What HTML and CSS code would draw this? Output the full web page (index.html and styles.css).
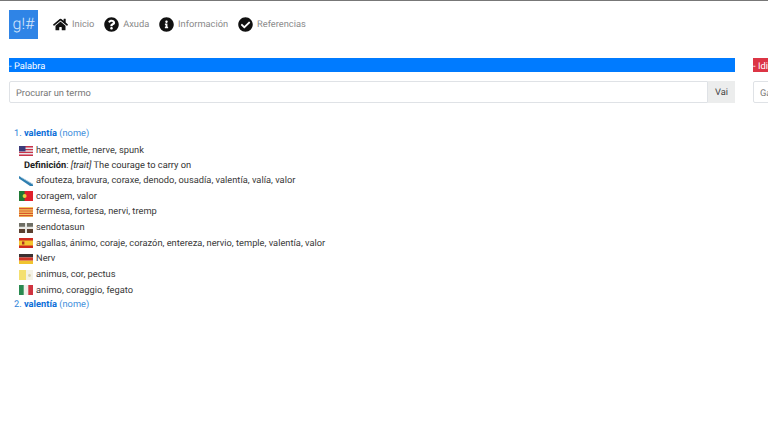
FILE: index.html
```html
<!DOCTYPE html>
<html lang="gl">
<head>
<meta charset="utf-8">
<title>Galnet</title>
<link rel="stylesheet" href="styles.css">
</head>
<body>
<header class="nav">
  <div class="logo">g!#</div>
  <a class="nav-item"><svg class="ico home" viewBox="0 0 576 512"><path d="M280.37 148.26L96 300.11V464a16 16 0 0 0 16 16l112.06-.29a16 16 0 0 0 15.92-16V368a16 16 0 0 1 16-16h64a16 16 0 0 1 16 16v95.64a16 16 0 0 0 16 16.05L464 480a16 16 0 0 0 16-16V300L295.67 148.26a12.19 12.19 0 0 0-15.3 0zM571.6 251.47L488 182.56V44.05a12 12 0 0 0-12-12h-56a12 12 0 0 0-12 12v72.61L318.47 43a48 48 0 0 0-61 0L4.34 251.47a12 12 0 0 0-1.6 16.9l25.5 31A12 12 0 0 0 45.15 301l235.22-193.74a12.19 12.19 0 0 1 15.3 0L530.9 301a12 12 0 0 0 16.9-1.6l25.5-31a12 12 0 0 0-1.7-16.93z"/></svg>Inicio</a>
  <a class="nav-item"><svg class="ico" viewBox="0 0 512 512"><path d="M504 256c0 136.997-111.043 248-248 248S8 392.997 8 256C8 119.083 119.043 8 256 8s248 111.083 248 248zM262.655 90c-54.497 0-89.255 22.957-116.549 63.758-3.536 5.286-2.353 12.415 2.715 16.258l34.699 26.31c5.205 3.947 12.621 3.008 16.665-2.122 17.864-22.658 30.113-35.797 57.303-35.797 20.429 0 45.698 13.148 45.698 32.958 0 14.976-12.363 22.667-32.534 33.976C247.128 238.528 216 254.941 216 296v4c0 6.627 5.373 12 12 12h56c6.627 0 12-5.373 12-12v-1.333c0-28.462 83.186-29.647 83.186-106.667 0-58.002-60.165-102-116.531-102zM256 338c-25.365 0-46 20.635-46 46 0 25.364 20.635 46 46 46s46-20.636 46-46c0-25.365-20.635-46-46-46z"/></svg>Axuda</a>
  <a class="nav-item"><svg class="ico" viewBox="0 0 512 512"><path d="M256 8C119.043 8 8 119.083 8 256c0 136.997 111.043 248 248 248s248-111.003 248-248C504 119.083 392.957 8 256 8zm0 110c23.196 0 42 18.804 42 42s-18.804 42-42 42-42-18.804-42-42 18.804-42 42-42zm56 254c0 6.627-5.373 12-12 12h-88c-6.627 0-12-5.373-12-12v-24c0-6.627 5.373-12 12-12h12v-64h-12c-6.627 0-12-5.373-12-12v-24c0-6.627 5.373-12 12-12h64c6.627 0 12 5.373 12 12v100h12c6.627 0 12 5.373 12 12v24z"/></svg>Información</a>
  <a class="nav-item"><svg class="ico" viewBox="0 0 512 512"><path d="M504 256c0 136.967-111.033 248-248 248S8 392.967 8 256 119.033 8 256 8s248 111.033 248 248zM227.314 387.314l184-184c6.248-6.248 6.248-16.379 0-22.627l-22.627-22.627c-6.248-6.249-16.379-6.249-22.628 0L216 308.118l-70.059-70.059c-6.248-6.248-16.379-6.248-22.628 0l-22.627 22.627c-6.248 6.248-6.248 16.379 0 22.627l104 104c6.249 6.249 16.379 6.249 22.628.001z"/></svg>Referencias</a>
</header>
<main class="search">
  <section class="panel panel-word">
    <div class="bar bar-blue">- Palabra</div>
    <div class="field"><div class="input">Procurar un termo</div><div class="go">Vai</div></div>
  </section>
  <section class="panel panel-lang">
    <div class="bar bar-red">- Idioma</div>
    <div class="field"><div class="input">Galego</div></div>
  </section>
</main>
<section class="results">
  <div class="head">1. <b class="term">valentía</b> <span class="pos">(nome)</span></div>
  <div class="row"><svg class="flag" viewBox="0 0 14 10"><rect width="14" height="10" fill="#e8e4ea"/><path d="M0 0h14v1.4H0zM0 2.9h14v1.4H0zM0 5.7h14v1.4H0zM0 8.6h14V10H0z" fill="#c9344a"/><rect width="6.5" height="5.4" fill="#3c3b7a"/></svg>heart, mettle, nerve, spunk</div>
  <div class="def"><b>Definición</b>: <i>[trait]</i> The courage to carry on</div>
  <div class="row"><svg class="flag" viewBox="0 0 14 10"><path d="M0 0l14 8v2H11L0 2.5z" fill="#2f7fb0"/><path d="M1 .2l13 7.6v1L2 1.6z" fill="#bcd6e6"/></svg>afouteza, bravura, coraxe, denodo, ousadía, valentía, valía, valor</div>
  <div class="row"><svg class="flag" viewBox="0 0 14 10"><rect width="14" height="10" fill="#e0202a"/><rect width="5.6" height="10" fill="#1f7a35"/><circle cx="5.6" cy="5" r="2" fill="#e8d040"/></svg>coragem, valor</div>
  <div class="row"><svg class="flag" viewBox="0 0 14 10"><rect width="14" height="10" fill="#f4c860"/><path d="M0 1.1h14v1.2H0zM0 3.4h14v1.2H0zM0 5.7h14v1.2H0zM0 8h14v1.2H0z" fill="#d8552a"/></svg>fermesa, fortesa, nervi, tremp</div>
  <div class="row"><svg class="flag" viewBox="0 0 14 10"><rect width="14" height="10" fill="#e8e8e4"/><path d="M0 0h6v3.8H0zM8 0h6v3.8H8z" fill="#6e6e64"/><path d="M0 6h6v4H0zM8 6h6v4H8z" fill="#5a4030"/></svg>sendotasun</div>
  <div class="row"><svg class="flag" viewBox="0 0 14 10"><rect width="14" height="10" fill="#cf2a20"/><rect y="2.5" width="14" height="5" fill="#f4c530"/><rect x="3" y="3.5" width="2.4" height="3" fill="#b03020"/></svg>agallas, ánimo, coraje, corazón, entereza, nervio, temple, valentía, valor</div>
  <div class="row"><svg class="flag" viewBox="0 0 14 10"><rect width="14" height="3.4" fill="#3a3030"/><rect y="3.4" width="14" height="3.3" fill="#d03428"/><rect y="6.7" width="14" height="3.3" fill="#f0c430"/></svg>Nerv</div>
  <div class="row"><svg class="flag" viewBox="0 0 14 10"><rect width="14" height="10" fill="#f4f2e6"/><rect width="7" height="10" fill="#f4e070"/><circle cx="10.5" cy="5.5" r="1.4" fill="#d8d2b0"/></svg>animus, cor, pectus</div>
  <div class="row"><svg class="flag" viewBox="0 0 14 10"><rect width="14" height="10" fill="#f0f0ea"/><rect width="4.7" height="10" fill="#2a8a50"/><rect x="9.3" width="4.7" height="10" fill="#d03440"/></svg>animo, coraggio, fegato</div>
  <div class="head">2. <b class="term">valentía</b> <span class="pos">(nome)</span></div>
</section>
</body>
</html>
```
FILE: styles.css
```css
html, body { margin: 0; padding: 0; }
body {
  width: 768px;
  height: 432px;
  overflow: hidden;
  background: #fff;
  color: #3a3a3a;
  font-family: Roboto, "Noto Sans", sans-serif;
  font-size: 9.3px;
  text-rendering: geometricPrecision;
  border-top: 1px solid #777;
  box-sizing: border-box;
}
.nav {
  display: flex;
  align-items: center;
  gap: 9.8px;
  padding: 9px 0 0 9px;
  height: 29px;
}
.logo {
  width: 29px;
  height: 29px;
  margin-right: 5.2px;
  background: #2f84e6;
  color: #d6e6fb;
  font-size: 16px;
  font-weight: 300;
  line-height: 28px;
  text-align: center;
}
.nav-item {
  display: flex;
  align-items: center;
  gap: 4px;
  color: #8a8a8a;
  margin-top: -1px;
}
.ico { width: 15px; height: 15px; fill: #111; }
.search {
  display: flex;
  gap: 18px;
  margin-top: 19px;
  padding-left: 9px;
}
.panel { flex: none; }
.panel-word { width: 726px; }
.panel-lang { width: 200px; }
.bar {
  height: 14px;
  line-height: 17px;
  color: #fff;
}
.bar-blue { background: #007bff; }
.bar-red { background: #dc3545; }
.field { display: flex; margin-top: 9px; height: 22px; }
.input {
  flex: 1;
  box-sizing: border-box;
  border: 1px solid #dfe2e6;
  border-radius: 2px 0 0 2px;
  padding: 1px 0 0 6px;
  line-height: 21px;
  color: #777;
}
.go {
  width: 27px;
  background: #eceded;
  line-height: 23px;
  text-align: center;
  color: #444;
}
.results { margin-top: 24px; padding-left: 14px; }
.head { line-height: 14px; color: #2f84d8; }
.term { color: #0d6fd8; font-weight: 700; }
.pos { color: #3f8fdc; }
.row {
  display: flex;
  align-items: center;
  gap: 3px;
  height: 15.7px;
  padding-left: 5px;
  white-space: nowrap;
}
.head + .row { margin-top: 2px; }
.def { height: 14px; line-height: 14px; padding-left: 10px; color: #333; }
.def b { color: #222; }
.flag { width: 14px; height: 10px; flex: none; }
```
